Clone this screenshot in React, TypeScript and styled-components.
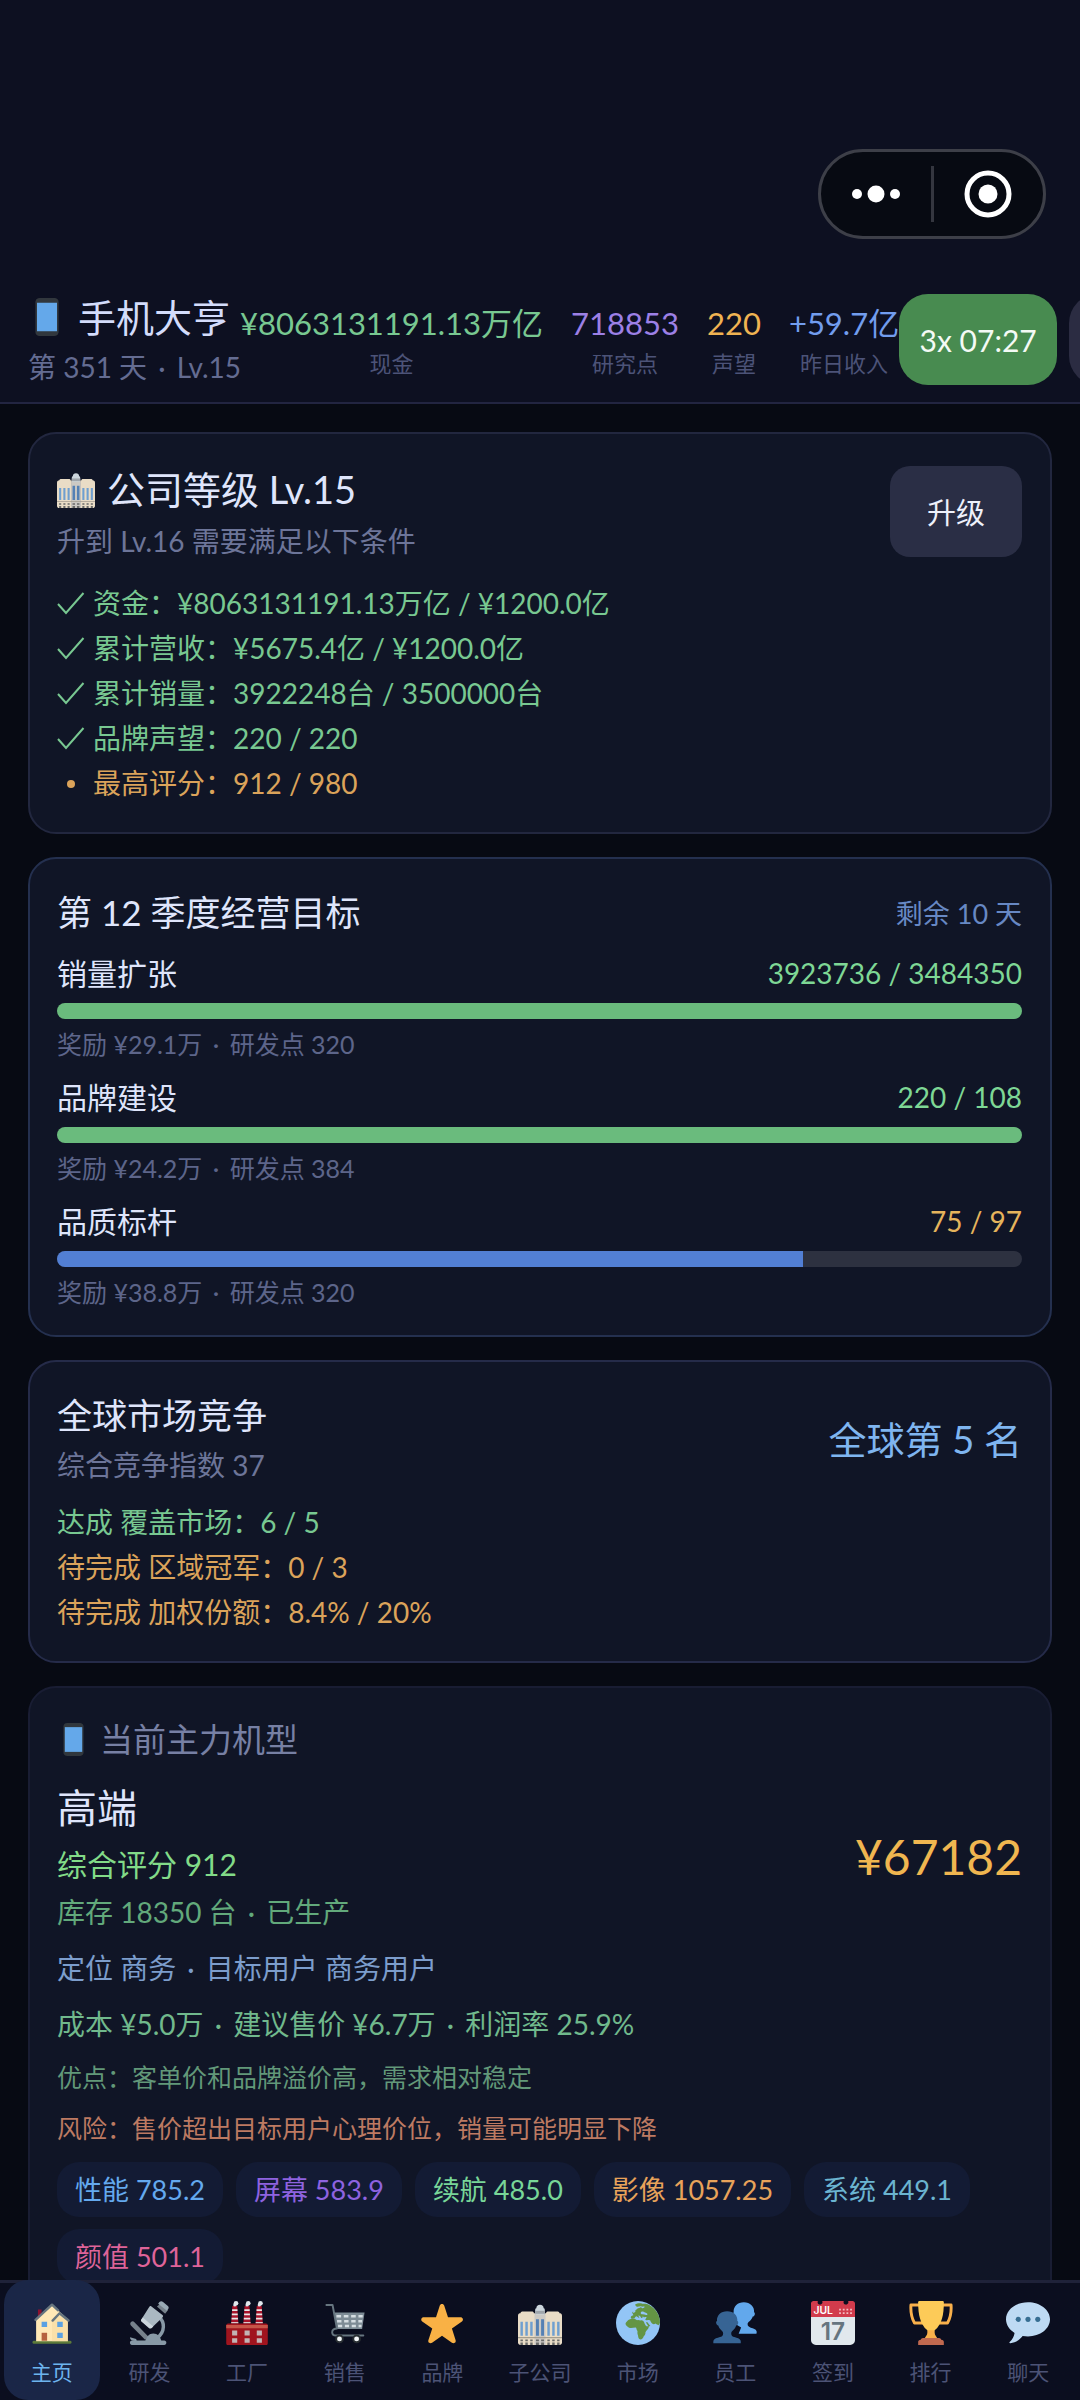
import React, { Fragment } from 'react';
import styled, { createGlobalStyle } from 'styled-components';

const GlobalStyle = createGlobalStyle`
  * {
    box-sizing: border-box;
  }

  body {
    margin: 0;
    background: #070a13;
    color: #dfe5fb;
    font-family: Lato, 'Noto Sans CJK SC', sans-serif;
  }

  h1, h2, p, ul {
    margin: 0;
    padding: 0;
    font-weight: 400;
    list-style: none;
  }

  button {
    border: 0;
    padding: 0;
    font-family: inherit;
    cursor: pointer;
  }
`;

type Tone = 'green' | 'orange' | 'blue' | 'purple' | 'amber' | 'muted';

const tones: Record<Tone, string> = {
  green: '#78c891',
  orange: '#dba35a',
  blue: '#729dee',
  purple: '#9c80e6',
  amber: '#efb352',
  muted: '#6d7599',
};

const Page = styled.div`
  display: flex;
  flex-direction: column;
  height: 100vh;
  overflow: hidden;
`;

const Header = styled.header`
  flex: none;
  padding: 149px 0 15px;
  background: #0d1021;
  border-bottom: 2px solid #222541;
  overflow: hidden;
`;

const Capsule = styled.div`
  display: flex;
  align-items: center;
  width: 228px;
  height: 90px;
  margin: 0 34px 53px auto;
  border: 3px solid #3d3f48;
  border-radius: 45px;
  background: #070a12;
`;

const CapsuleButton = styled.button`
  display: flex;
  flex: 1;
  align-items: center;
  justify-content: center;
  height: 56px;
  background: none;

  & + & {
    border-left: 3px solid #34363f;
  }
`;

const TopBar = styled.div`
  display: flex;
  align-items: center;
  padding-left: 28px;
  white-space: nowrap;
`;

const Brand = styled.div`
  flex: none;
  width: 212px;
`;

const BrandName = styled.h1`
  display: flex;
  align-items: center;
  gap: 12px;
  color: #d3dcfb;
  font-size: 38px;
  line-height: 50px;
`;

const BrandSub = styled.p`
  margin-top: 5px;
  color: #646c92;
  font-size: 28px;
  line-height: 40px;
`;

const Stats = styled.div`
  display: flex;
  flex: none;
  gap: 28px;
  padding-top: 2px;
`;

const Stat = styled.div`
  text-align: center;
`;

const StatValue = styled.p<{ $tone: Tone }>`
  color: ${({ $tone }) => tones[$tone]};
  font-size: 31px;
  line-height: 40px;
`;

const StatLabel = styled.p`
  margin-top: 6px;
  color: #4c5378;
  font-size: 22px;
  line-height: 30px;
`;

const SpeedButton = styled.button<{ $active?: boolean }>`
  flex: none;
  width: 158px;
  height: 91px;
  margin-right: 12px;
  border-radius: 29px;
  background: ${({ $active }) => ($active ? '#488b50' : '#2b2c42')};
  color: #f4faf5;
  font-size: 30px;
`;

const Main = styled.main`
  display: flex;
  flex: 1;
  flex-direction: column;
  gap: 23px;
  min-height: 0;
  padding: 28px;
  overflow-y: auto;
  scrollbar-width: none;
`;

const Card = styled.section<{ $border?: string }>`
  flex: none;
  padding: 27px 28px 26px 27px;
  border: 2px solid ${({ $border }) => $border || '#22273f'};
  border-radius: 28px;
  background: #101526;
`;

const CardHead = styled.div`
  display: flex;
  align-items: center;
  justify-content: space-between;
`;

const CardTitle = styled.h2<{ $large?: boolean }>`
  display: flex;
  align-items: center;
  gap: 12px;
  font-size: ${({ $large }) => ($large ? 38 : 35)}px;
  line-height: ${({ $large }) => ($large ? 56 : 52)}px;
`;

const CardSub = styled.p`
  margin-top: 4px;
  color: ${tones.muted};
  font-size: 28px;
  line-height: 40px;
`;

const UpgradeButton = styled.button`
  width: 132px;
  height: 91px;
  border-radius: 20px;
  background: #2a2e45;
  color: #eef1fb;
  font-size: 29px;
`;

const Remaining = styled.span`
  color: #6788c4;
  font-size: 27px;
`;

const Rank = styled.span`
  color: #7fb5f0;
  font-size: 38px;
`;

const Conditions = styled.ul<{ $spaced?: boolean }>`
  margin-top: ${({ $spaced }) => ($spaced ? 20 : 15)}px;
`;

const Condition = styled.li<{ $done: boolean }>`
  display: flex;
  align-items: center;
  gap: 8px;
  color: ${({ $done }) => ($done ? tones.green : tones.orange)};
  font-size: 28px;
  line-height: 45px;
`;

const Goals = styled.div`
  display: flex;
  flex-direction: column;
  gap: 16px;
  margin-top: 15px;
`;

const GoalHead = styled.div`
  display: flex;
  justify-content: space-between;
  font-size: 30px;
  line-height: 40px;
`;

const GoalValue = styled.span<{ $done: boolean }>`
  color: ${({ $done }) => ($done ? '#7ed795' : '#e5b45c')};
  font-size: 28px;
`;

const Track = styled.div`
  height: 16px;
  margin: 10px 0 8px;
  border-radius: 8px;
  background: #2d3140;
  overflow: hidden;
`;

const Fill = styled.div<{ $done: boolean }>`
  height: 100%;
  background: ${({ $done }) => ($done ? '#6abb7d' : '#527fd4')};
`;

const Reward = styled.p`
  color: #5d658a;
  font-size: 25px;
  line-height: 34px;
`;

const ModelLabel = styled.h2`
  display: flex;
  align-items: center;
  gap: 10px;
  margin-bottom: 17px;
  color: #7780a4;
  font-size: 33px;
  line-height: 48px;
`;

const ModelName = styled.p`
  font-size: 40px;
  line-height: 56px;
`;

const Score = styled.p`
  margin-top: 7px;
  color: #82db88;
  font-size: 30px;
  line-height: 42px;
`;

const Stock = styled.p`
  margin-top: 7px;
  color: #62a97b;
  font-size: 28px;
  line-height: 40px;
`;

const Price = styled.span`
  color: #f0b650;
  font-size: 48px;
`;

const Info = styled.p<{ $color: string }>`
  margin-top: 16px;
  color: ${({ $color }) => $color};
  font-size: 28px;
  line-height: 40px;
`;

const Note = styled.p<{ $color: string }>`
  margin-top: 16px;
  color: ${({ $color }) => $color};
  font-size: 25px;
  line-height: 35px;
`;

const Chips = styled.ul`
  display: flex;
  flex-wrap: wrap;
  gap: 12px 13px;
  margin-top: 16px;
`;

const Chip = styled.li<{ $color: string }>`
  padding: 0 18px;
  border-radius: 22px;
  background: #131b34;
  color: ${({ $color }) => $color};
  font-size: 27px;
  line-height: 55px;
`;

const Dot = styled.span`
  margin: 0 4px;
`;

const Nav = styled.nav`
  display: flex;
  flex: none;
  gap: 2px;
  padding: 0 4px;
  background: #0b0e1f;
  box-shadow: inset 0 3px 0 #1f2239;
`;

const NavItem = styled.a<{ $active: boolean }>`
  display: flex;
  flex: 1 1 0;
  flex-direction: column;
  align-items: center;
  gap: 10px;
  padding: 21px 0 12px;
  border-radius: 24px;
  background: ${({ $active }) => ($active ? '#1a2647' : 'transparent')};
  color: ${({ $active }) => ($active ? '#6db4ee' : '#4c5376')};
  font-size: 21px;
  line-height: 33px;
  text-decoration: none;
  white-space: nowrap;
`;

const Icon = styled.svg<{ $size: number }>`
  flex: none;
  width: ${({ $size }) => $size}px;
  height: ${({ $size }) => $size}px;
`;

type IconProps = { size?: number };

const PhoneIcon = ({ size = 44 }: IconProps) => (
  <Icon $size={size} viewBox="0 0 36 36" aria-hidden="true">
    <path fill="#31373d" d="M11 36s-4 0-4-4V4s0-4 4-4h14s4 0 4 4v28s0 4-4 4H11z" />
    <path fill="#64a8ea" d="M8.500 4.500h19v27h-19z" />
  </Icon>
);

const OfficeIcon = ({ size = 44 }: IconProps) => (
  <Icon $size={size} viewBox="0 0 36 36" aria-hidden="true">
    <path fill="#ccd6dd" d="M14 12V8c0-1.500.5-2 1-2 0-2 1.200-3 3-3s3 1 3 3c.5 0 1 .5 1 2v4z" />
    <path fill="#e9dcc6" d="M0 12c0-1.500 1-2 2-2 0-1 1-1.500 2-1.500h7c1.500 0 2 .5 2 1.500h1v26H2c-1 0-2-1-2-2zM36 12c0-1.500-1-2-2-2 0-1-1-1.500-2-1.500h-7c-1.500 0-2 .5-2 1.500h-1v26h12c1 0 2-1 2-2z" />
    <path fill="#ccc9c4" d="M13.500 11h9v25h-9z" />
    <path fill="#9fa5ab" d="M14 8h8v2.500h-8z" />
    <path fill="#6f9fd0" d="M2 17h2v11.500H2zM6 17h2v11.500H6zM10 17h2v11.500h-2zM24 17h2v11.500h-2zM28 17h2v11.500h-2zM32 17h2v11.500h-2z" />
    <path fill="#5480b4" d="M14.700 15h2.400v13.500h-2.400zM18.900 15h2.400v13.500h-2.400z" />
    <path fill="#a49d8f" d="M0 29.500h36v.9H0z" />
    <path fill="#6a6a68" d="M2 31.500h2v1.400H2zM6 31.500h2v1.400H6zM10 31.500h2v1.400h-2zM14.700 31.500h2.400v1.400h-2.400zM18.900 31.500h2.400v1.400h-2.400zM24 31.500h2v1.400h-2zM28 31.500h2v1.400h-2zM32 31.500h2v1.400h-2zM2 34h2v2H2zM6 34h2v2H6zM10 34h2v2h-2zM14.700 34h2.400v2h-2.400zM18.900 34h2.400v2h-2.400zM24 34h2v2h-2zM28 34h2v2h-2zM32 34h2v2h-2z" />
  </Icon>
);

const HouseIcon = ({ size = 44 }: IconProps) => (
  <Icon $size={size} viewBox="0 0 36 36" aria-hidden="true">
    <path fill="#8c1330" d="M6.500 7h3v6l-3 3z" />
    <path fill="#5c7a3a" d="M3 35c-.8 0-1-.5-1-1.200S2.400 32.500 3 32.500h30c.7 0 1 .6 1 1.300s-.3 1.200-1 1.200z" />
    <path fill="#ffe8b6" d="M5 33V15L18 3l13 12v18z" />
    <path fill="#f5d79a" d="M18 16l6-6 7 7v16H18z" opacity=".45" />
    <path fill="none" stroke="#66757f" strokeWidth="2" strokeLinecap="round" strokeLinejoin="round" d="M4.500 15.500L18 3l5 4.600" />
    <path fill="none" stroke="#66757f" strokeWidth="2" strokeLinecap="round" strokeLinejoin="round" d="M18.500 16l5.700-6 7.300 6" />
    <path fill="#5ba1e2" d="M9.500 17h4.500v4.200H9.500zM22.300 17h4.500v4.200h-4.500zM22.300 26h4.500v4.200h-4.500z" />
    <path fill="#b5623f" d="M9.500 26h4.500v6.500H9.500z" />
  </Icon>
);

const MicroscopeIcon = ({ size = 44 }: IconProps) => (
  <Icon $size={size} viewBox="0 0 36 36" aria-hidden="true">
    <path fill="none" stroke="#8899a6" strokeWidth="2.800" d="M26 13c5 4 5.500 12-1.500 17.500" />
    <path fill="#77828c" d="M3.300 17.200c.8-.8 2-.7 2.800.1l11.500 12-2.800 2.400L3.200 20c-.8-.8-.7-2 .1-2.800z" />
    <path fill="#8899a6" d="M4 36c-1 0-1.600-.8-1.600-1.800S3 32.600 4 32.400h11c1-3 3-5.800 6.500-5.800s5.800 2.500 6.500 5.800h2.500c1 0 1.700.8 1.700 1.800S31.500 36 30.500 36z" />
    <path fill="#8899a6" d="M2.500 29.600l5 1.400.6 2-3.200-.4c-1.500-.5-2.600-1.700-2.400-3z" />
    <path fill="#aab8c2" d="M20 4.500l9 7c.6.500.7 1 .2 1.700L20.500 21.700c-.7.600-1.500.6-2.200 0l-6-5c-.7-.6-.8-1.400-.2-2.100l6.200-9.800c.4-.7 1.100-.8 1.700-.3z" />
    <path fill="#ccd6dd" d="M13 13.500l8.500 7.300-1.300 1.300c-.7.600-1.600.6-2.300 0L12 17c-.7-.6-.8-1.400-.2-2.100z" />
    <path fill="#77828c" d="M24.500 4.600L27 2.500l6.400 5-2.200 3z" />
    <path fill="#99aab5" d="M26.500.8c1-.8 2-.8 3 0l3.700 3c1 .8 1.200 1.800.5 2.800l-1 1.400-7.200-5.700z" />
  </Icon>
);

const FactoryIcon = ({ size = 44 }: IconProps) => (
  <Icon $size={size} viewBox="0 0 36 36" aria-hidden="true">
    {[8, 18, 28].map((x) => (
      <g key={x}>
        <path fill="#a8142b" d={`M${x - 2} 4h4l1 14.500h-6z`} />
        <path stroke="#e6e7e8" strokeWidth="1.400" d={`M${x - 2.200} 7.500h4.400M${x - 2.400} 11h4.800M${x - 2.600} 14.500h5.200`} />
        <path stroke="#e6e7e8" strokeWidth="1" d={`M${x - 2.900} 17.800h5.800`} />
        <circle cx={x + 1} cy="1.900" r="1.900" fill="#e1e8ed" />
        <circle cx={x} cy="3.300" r="1.300" fill="#e1e8ed" />
      </g>
    ))}
    <path fill="#a0141e" d="M1 20c0-1 .6-1.600 1.500-1.600h31c1 0 1.500.6 1.500 1.600v14.500c0 1-.6 1.500-1.500 1.500h-31C1.500 36 1 35.500 1 34.500z" />
    <path fill="#c75649" d="M1 19.600h34v2.600H1z" />
    <path fill="#c2b3b4" d="M5.800 24.200H10v4H5.800zM16 24.200h4.200v4H16zM26 24.200h4.200v4H26zM5.800 30.400H10v3.800H5.800zM16 30.400h4.200v3.800H16zM26 30.400h4.200v3.800H26z" />
  </Icon>
);

const CartIcon = ({ size = 44 }: IconProps) => (
  <Icon $size={size} viewBox="0 0 36 36" aria-hidden="true">
    <path fill="#7d8b95" d="M8.800 9.500H34L32 23H11.500z" />
    <path stroke="#d5dde2" strokeWidth="2" strokeDasharray="3.800 2.200" d="M11 12.400h21.500" />
    <path stroke="#d5dde2" strokeWidth="2" strokeDasharray="3.600 2.200" d="M11.500 16.500H32" />
    <path stroke="#d5dde2" strokeWidth="2" strokeDasharray="3.400 2.200" d="M12.300 20.500h19.200" />
    <path fill="none" stroke="#66757f" strokeWidth="1.600" strokeLinecap="round" strokeLinejoin="round" d="M2.800 3.200h5l3.600 19.300c-2 0-3.900 1-3.900 3 0 1.800 1.400 2.700 3.200 2.700H33" />
    <circle cx="13.500" cy="31" r="3.500" fill="#292f33" />
    <circle cx="27.500" cy="31" r="3.500" fill="#292f33" />
    <circle cx="13.500" cy="31" r="2" fill="#f5f8fa" />
    <circle cx="27.500" cy="31" r="2" fill="#f5f8fa" />
  </Icon>
);

const StarIcon = ({ size = 44 }: IconProps) => (
  <Icon $size={size} viewBox="0 0 36 36" aria-hidden="true">
    <path
      fill="#f9b145"
      d="M27.287 34.627c-.404 0-.806-.124-1.152-.371L18 28.422l-8.135 5.834c-.343.247-.748.371-1.151.371-.405 0-.81-.125-1.156-.375-.684-.499-.968-1.380-.71-2.185l3.179-9.643-8.202-5.630c-.689-.491-.978-1.371-.719-2.175.26-.805 1.007-1.350 1.853-1.353l10.142-.012 3.042-9.400c.262-.806 1.012-1.352 1.859-1.352.846 0 1.596.545 1.857 1.349l3.053 9.403 10.266.014c.848.001 1.598.547 1.858 1.354.26.806-.029 1.687-.719 2.175l-8.200 5.631 3.030 9.642c.265.801-.019 1.684-.7 2.180-.346.252-.75.376-1.161.376z"
    />
  </Icon>
);

const GlobeIcon = ({ size = 44 }: IconProps) => (
  <Icon $size={size} viewBox="0 0 36 36" aria-hidden="true">
    <circle cx="18" cy="18" r="18" fill="#93c5f6" />
    <path fill="#649544" d="M15.500 3c2-1.200 4.300-1.300 6-.8 2 .2 3.500-.3 5.300.9C32.500 6 36 11.500 36 18l-1.200 1.800c-.8-.7-1.800-.5-2.500-1.400-.6.500-1.700.8-2.500.2-.9-.7-1.700-1.900-1.700-2.600-.5-.5-1.600-.2-2.300-.5-.4.400-1.600.3-1.900-.3.3-1 1.200-1.300 1-2-.7-.2-2.200.6-2.600-.4-.5-.6-1 .2-.6 1-.6.6-1.300-.2-1.600-1-.6-.3-1.100-1.100-1.800-.8.300.7 1 1.400.6 1.900-.8-.4-1.700-1.500-2.600-1.300-.9.500-.8 1.700-1.900 1.700-1 .4-2.300.2-2.300-.8 0-1.200 1.200-1.700 2.100-1.900-.1-.8-1.300-1.500-.8-2.500 1-.9 2-.6 2.800-1.800.9-.6 1.500-1.800 3-1.600.5-.9 1.800-.6 2.200.2 1 .1 2.100-.4 2-1.300-1-.4-1.800.3-2.500-.1-1.700-.6-3 .9-4.400-.2z" />
    <path fill="#93c5f6" d="M20.500 9c1.400-.8 2-.3 3.200.5 1 .2 2.200.8 2 1.700-1.200.6-2.700-.2-4-.3-1.200 0-2-.9-1.200-1.900zM13.400 8.800l2.300-1.300.2 1.200-1.500 1.200z" />
    <path fill="#649544" d="M9.800 15.800c1.600-1.300 3.800-1.200 5.600-1.200.8.3 1 1.200 2 1.200.8-.6 1.800 0 2.700.1 1.300-.3 2.500.4 2.900 1.500.5 1.300 1 2.500 1.900 3.300.8 0 1.700-.3 2 .4-.3 2-2.300 3-2.800 4.500.1 1.400-.5 2.400-1.400 3.200-.5 1.400-1.300 2.700-2.700 2.700-1.600-.2-1.900-2-2-3.400-.6-1.200-.5-2.300-.4-3.500-.8-.9-.7-2-1.200-2.800-1.900-.2-3.900.9-5.700 0-1.600-.7-3-2.100-2.900-3.400.4-1 1.400-1.800 2-2.600zM24.500 17.500l1-.3 2.600 3.300-1.500.3z" />
  </Icon>
);

const StaffIcon = ({ size = 44 }: IconProps) => (
  <Icon $size={size} viewBox="0 0 36 36" aria-hidden="true">
    <path fill="#62a8ec" d="M35.600 24.500c-.5-1.600-2.600-2-4.700-2.700-1.500-.6-2.600-1.100-2.600-2.900 0-1.200.8-1.700 1.600-2.400 1.100-1 2.300-2.300 2.600-3.800.7 0 1.500-.7 1.700-1.700.2-.8-.1-1.600-.6-1.800.5-4.600-3.200-8.200-8.400-8.200-5 0-8.600 3.300-8.300 8.200l-.5 1 1.600 8.500 5 3-2 5h14.500c.4-.8.3-1.500.1-2.200z" />
    <path fill="#376494" d="M22.500 32.200c-.5-1.400-2.700-2-5-2.700-1.500-.5-2.600-1.200-2.600-3 0-1.300.9-2 1.700-2.800 1.100-1 2-2.200 2.300-3.600.8.100 1.600-.8 1.700-1.800.2-.9-.1-1.700-.7-1.900.4-4.700-3-8.100-8.300-8.100s-8.700 3.400-8.300 8.100c-.6.200-.9 1-.7 1.900.2 1 1 1.900 1.700 1.800.4 1.400 1.200 2.600 2.300 3.600.8.800 1.700 1.500 1.700 2.800 0 1.800-1.100 2.500-2.600 3-2.300.7-4.700 1.300-5.200 2.700-.3.900-.3 1.600-.2 2.300h22.400c.1-.7.100-1.400-.2-2.300z" />
  </Icon>
);

const CalendarText = styled.text`
  font-family: Inter, sans-serif;
  font-weight: 600;
`;

const CalendarIcon = ({ size = 44 }: IconProps) => (
  <Icon $size={size} viewBox="0 0 36 36" aria-hidden="true">
    <path fill="#e1e8ed" d="M36 32c0 2.200-1.800 4-4 4H4c-2.200 0-4-1.800-4-4V9h36z" />
    <path fill="#d23b4c" d="M32 0h-1.700c.2.300.3.600.3 1 0 1-.9 1.900-2 1.900s-2-.8-2-1.900c0-.4.100-.7.300-1H9.100c.2.300.3.600.3 1 0 1-.9 1.900-2 1.900s-2-.8-2-1.900c0-.4.100-.7.300-1H2C1 0 0 1 0 2v11h36V2c0-1-1-2-2-2z" />
    <CalendarText x="2" y="11" fontSize="8.500" fill="#fff">JUL</CalendarText>
    <path stroke="#f3bcc1" strokeWidth="1.400" strokeDasharray="1.500 1.500" d="M23 7h11M23 10h11" />
    <CalendarText x="18" y="32" fontSize="20" textAnchor="middle" fill="#66757f">17</CalendarText>
  </Icon>
);

const TrophyIcon = ({ size = 44 }: IconProps) => (
  <Icon $size={size} viewBox="0 0 36 36" aria-hidden="true">
    <path fill="none" stroke="#f9b04b" strokeWidth="2.400" strokeLinejoin="round" d="M9 3.200H1.600C1.200 9 2.500 14.500 4.500 18H12M27 3.200h7.400C34.800 9 33.500 14.500 31.500 18H24" />
    <path fill="#f9b04b" d="M15 23h6v3c0 2 1.500 3 2.500 5h-11c1-2 2.500-3 2.500-5z" />
    <path fill="#fdcb58" d="M7.500 1c0-.7.500-1 1.200-1h18.600c.7 0 1.200.4 1.200 1 0 10-1.500 18-7.500 23h-6c-6-5-7.500-13-7.500-23z" />
    <path fill="#c1694f" d="M7.500 33.500c0-1 .8-1.500 2-1.500 0-1 .8-1.800 2-1.800h13c1.200 0 2 .8 2 1.800 1.200 0 2 .5 2 1.500V36h-21z" />
  </Icon>
);

const ChatIcon = ({ size = 44 }: IconProps) => (
  <Icon $size={size} viewBox="0 0 36 36" aria-hidden="true">
    <path fill="#bedaf3" d="M18 1C8 1 0 7.200 0 15c0 4.600 2.800 8.600 7 11.100-.4 2.700-1.700 5.300-4 7.400-.5.500-.2 1.100.6 1 4.500-.6 8-2.900 10-5.800 1.400.2 2.900.3 4.400.3 10 0 18-6.200 18-14S28 1 18 1z" />
    <circle cx="10" cy="15" r="2.100" fill="#376e92" />
    <circle cx="18" cy="15" r="2.100" fill="#376e92" />
    <circle cx="26" cy="15" r="2.100" fill="#376e92" />
  </Icon>
);

const Mark = ({ done }: { done: boolean }) => (
  <Icon $size={28} viewBox="0 0 28 28" aria-hidden="true">
    {done ? (
      <path fill="none" stroke="currentColor" strokeWidth="2" d="M1 14l8 9L26.500 3" />
    ) : (
      <circle cx="14" cy="14" r="4" fill="currentColor" />
    )}
  </Icon>
);

// "a · b · c" with a bit of air on both sides of every dot
const Dotted = ({ parts }: { parts: string[] }) => (
  <>
    {parts.map((part, index) => (
      <Fragment key={part}>
        {index > 0 && <> <Dot>·</Dot> </>}
        {part}
      </Fragment>
    ))}
  </>
);

const stats: { value: string, label: string, tone: Tone }[] = [
  { value: '¥8063131191.13万亿', label: '现金', tone: 'green' },
  { value: '718853', label: '研究点', tone: 'purple' },
  { value: '220', label: '声望', tone: 'amber' },
  { value: '+59.7亿', label: '昨日收入', tone: 'blue' },
];

const conditions = [
  { text: '资金：¥8063131191.13万亿 / ¥1200.0亿', done: true },
  { text: '累计营收：¥5675.4亿 / ¥1200.0亿', done: true },
  { text: '累计销量：3922248台 / 3500000台', done: true },
  { text: '品牌声望：220 / 220', done: true },
  { text: '最高评分：912 / 980', done: false },
];

const goals = [
  { name: '销量扩张', current: 3923736, target: 3484350, reward: ['奖励 ¥29.1万', '研发点 320'] },
  { name: '品牌建设', current: 220, target: 108, reward: ['奖励 ¥24.2万', '研发点 384'] },
  { name: '品质标杆', current: 75, target: 97, reward: ['奖励 ¥38.8万', '研发点 320'] },
];

const markets = [
  { text: '达成 覆盖市场：6 / 5', done: true },
  { text: '待完成 区域冠军：0 / 3', done: false },
  { text: '待完成 加权份额：8.4% / 20%', done: false },
];

const specs = [
  { text: '性能 785.2', color: '#64a9ee' },
  { text: '屏幕 583.9', color: '#8e63e0' },
  { text: '续航 485.0', color: '#78d698' },
  { text: '影像 1057.25', color: '#e8a35a' },
  { text: '系统 449.1', color: '#6bb4d0' },
  { text: '颜值 501.1', color: '#df6499' },
];

const navItems = [
  { label: '主页', icon: HouseIcon },
  { label: '研发', icon: MicroscopeIcon },
  { label: '工厂', icon: FactoryIcon },
  { label: '销售', icon: CartIcon },
  { label: '品牌', icon: StarIcon },
  { label: '子公司', icon: OfficeIcon },
  { label: '市场', icon: GlobeIcon },
  { label: '员工', icon: StaffIcon },
  { label: '签到', icon: CalendarIcon },
  { label: '排行', icon: TrophyIcon },
  { label: '聊天', icon: ChatIcon },
];

const App = () => {

  const renderStats = stats.map((item) => (
    <Stat key={item.label}>
      <StatValue $tone={item.tone}>{item.value}</StatValue>
      <StatLabel>{item.label}</StatLabel>
    </Stat>
  ));

  const renderGoals = goals.map((goal) => {
    const done = goal.current >= goal.target;
    const percent = Math.min(100, (goal.current / goal.target) * 100);

    return (
      <div key={goal.name}>
        <GoalHead>
          <span>{goal.name}</span>
          <GoalValue $done={done}>{`${goal.current} / ${goal.target}`}</GoalValue>
        </GoalHead>
        <Track>
          <Fill $done={done} style={{ width: `${percent}%` }} />
        </Track>
        <Reward><Dotted parts={goal.reward} /></Reward>
      </div>
    )
  });

  const renderNav = navItems.map(({ label, icon: NavIcon }, index) => (
    <NavItem href={`#${label}`} key={label} $active={index === 0}>
      <NavIcon />
      {label}
    </NavItem>
  ));

  return (
    <Page lang="zh-CN">
      <GlobalStyle />
      <Header>
        <Capsule>
          <CapsuleButton aria-label="更多">
            <svg width="48" height="18" viewBox="0 0 48 18" fill="#fff">
              <circle cx="5" cy="9" r="5" />
              <circle cx="24" cy="9" r="8.500" />
              <circle cx="43" cy="9" r="5" />
            </svg>
          </CapsuleButton>
          <CapsuleButton aria-label="关闭">
            <svg width="48" height="48" viewBox="0 0 48 48">
              <circle cx="24" cy="24" r="21" fill="none" stroke="#fff" strokeWidth="5" />
              <circle cx="24" cy="24" r="9.500" fill="#fff" />
            </svg>
          </CapsuleButton>
        </Capsule>
        <TopBar>
          <Brand>
            <BrandName>
              <PhoneIcon size={38} />
              手机大亨
            </BrandName>
            <BrandSub><Dotted parts={['第 351 天', 'Lv.15']} /></BrandSub>
          </Brand>
          <Stats>{renderStats}</Stats>
          <SpeedButton $active>3x 07:27</SpeedButton>
          <SpeedButton aria-label="设置" />
        </TopBar>
      </Header>

      <Main>
        <Card>
          <CardHead>
            <div>
              <CardTitle $large>
                <OfficeIcon size={38} />
                公司等级 Lv.15
              </CardTitle>
              <CardSub>升到 Lv.16 需要满足以下条件</CardSub>
            </div>
            <UpgradeButton>升级</UpgradeButton>
          </CardHead>
          <Conditions $spaced>
            {conditions.map((item) => (
              <Condition key={item.text} $done={item.done}>
                <Mark done={item.done} />
                {item.text}
              </Condition>
            ))}
          </Conditions>
        </Card>

        <Card $border="#24304f">
          <CardHead>
            <CardTitle>第 12 季度经营目标</CardTitle>
            <Remaining>剩余 10 天</Remaining>
          </CardHead>
          <Goals>{renderGoals}</Goals>
        </Card>

        <Card $border="#252b49">
          <CardHead>
            <div>
              <CardTitle>全球市场竞争</CardTitle>
              <CardSub>综合竞争指数 37</CardSub>
            </div>
            <Rank>全球第 5 名</Rank>
          </CardHead>
          <Conditions>
            {markets.map((item) => (
              <Condition key={item.text} $done={item.done}>{item.text}</Condition>
            ))}
          </Conditions>
        </Card>

        <Card $border="#191d33">
          <ModelLabel>
            <PhoneIcon size={33} />
            当前主力机型
          </ModelLabel>
          <CardHead>
            <div>
              <ModelName>高端</ModelName>
              <Score>综合评分 912</Score>
              <Stock><Dotted parts={['库存 18350 台', '已生产']} /></Stock>
            </div>
            <Price>¥67182</Price>
          </CardHead>
          <Info $color="#7c9dcc"><Dotted parts={['定位 商务', '目标用户 商务用户']} /></Info>
          <Info $color="#70b98c"><Dotted parts={['成本 ¥5.0万', '建议售价 ¥6.7万', '利润率 25.9%']} /></Info>
          <Note $color="#629879">优点：客单价和品牌溢价高，需求相对稳定</Note>
          <Note $color="#bd7a62">风险：售价超出目标用户心理价位，销量可能明显下降</Note>
          <Chips>
            {specs.map((spec) => (
              <Chip key={spec.text} $color={spec.color}>{spec.text}</Chip>
            ))}
          </Chips>
        </Card>
      </Main>

      <Nav>{renderNav}</Nav>
    </Page>
  )
}

export default App;
